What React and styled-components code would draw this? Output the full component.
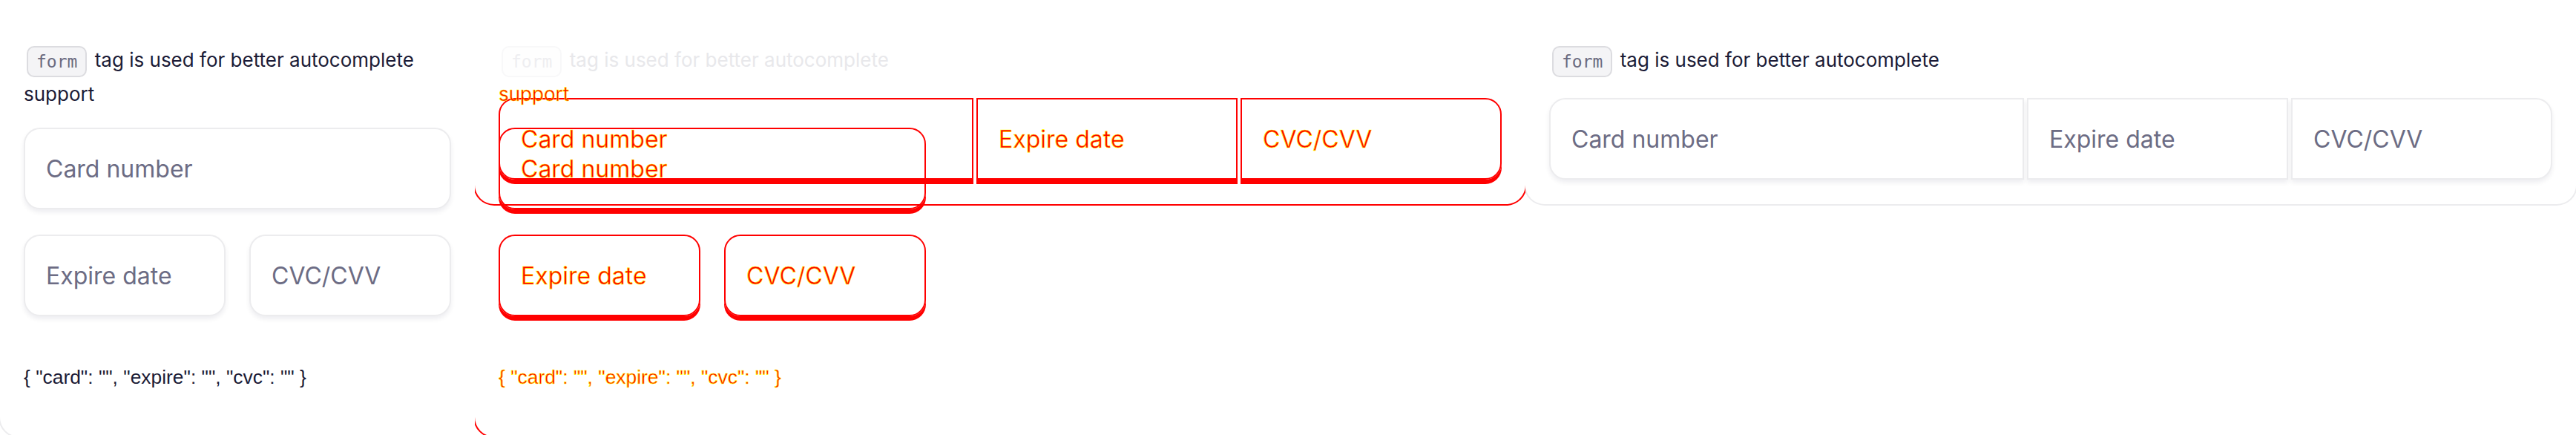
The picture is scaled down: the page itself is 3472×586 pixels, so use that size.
import React from "react";
import styled, { createGlobalStyle, css } from "styled-components";

const Global = createGlobalStyle`
  html, body { margin: 0; padding: 0; background: #fff; }
  body { font-family: Inter, "Noto Sans", sans-serif; }
`;

const INK = "#1b1b36";
const HINT = "#6c6c84";
const LINE = "#ececee";
const RED = "#ff0000";
const YELLOW = "#ffff00";

const Strip = styled.div`
  display: flex;
  width: 3472px;
  height: 586px;
  overflow: hidden;
`;

const Panel = styled.section`
  position: relative;
  flex: none;
  width: ${(p) => p.$w}px;
  height: 586px;
  overflow: hidden;
  background: #fff;
`;

const Layer = styled.div`
  position: absolute;
  top: 0;
  left: 0;
  width: ${(p) => p.$w}px;
  height: 586px;
  overflow: hidden;
`;

const Card = styled.div`
  box-sizing: border-box;
  margin: 0 -2px;
  padding: 58px 32px ${(p) => p.$padBottom}px;
  border: 2px solid ${(p) => (p.$tone === "diff" ? RED : LINE)};
  border-top: none;
  border-radius: ${(p) => (p.$clipRight ? "0 0 0 28px" : "0 0 28px 28px")};
  background: ${(p) => (p.$tone === "diff" ? "transparent" : "#fff")};
`;

const textColor = (tone) =>
  tone === "faded" ? "#e8e8eb" : tone === "hidden" ? "transparent" : INK;

const Lead = styled.p`
  margin: 0;
  font-size: 26px;
  line-height: 40px;
  color: ${(p) => textColor(p.$tone)};
`;

const tagTones = {
  normal: { bg: "#f4f4f6", border: "#dcdce0", color: "#6b6b80" },
  faded: { bg: "#fefefe", border: "#f8f8f9", color: "#eeeef1" },
  hidden: { bg: "transparent", border: "transparent", color: "transparent" },
};

const CodeTag = styled.code`
  display: inline-block;
  vertical-align: middle;
  box-sizing: border-box;
  height: 42px;
  margin: 4px 3px 3px 4px;
  padding: 0 11px;
  border: 2px solid ${(p) => tagTones[p.$tone].border};
  border-radius: 10px;
  background: ${(p) => tagTones[p.$tone].bg};
  color: ${(p) => tagTones[p.$tone].color};
  font-family: "DejaVu Sans Mono", "Liberation Mono", monospace;
  font-size: 23px;
  line-height: 38px;
`;

const hot = css`
  color: ${RED};
  -webkit-text-stroke: 0.6px ${YELLOW};
`;

const Hot = styled.span`
  ${hot}
`;

const Fields = styled.div`
  display: grid;
  margin-top: 25px;
  ${(p) =>
    p.$layout === "wide"
      ? css`
          grid-template-columns: 1fr 352px 352px;
          column-gap: 4px;
        `
      : css`
          grid-template-columns: 1fr 1fr;
          gap: 34px 32px;
          & > :first-child {
            grid-column: 1 / -1;
          }
        `}
`;

const radii = {
  full: "22px",
  left: "22px 0 0 22px",
  mid: "0",
  right: "0 22px 22px 0",
};

const fieldBox = css`
  box-sizing: border-box;
  width: 100%;
  height: 110px;
  margin: 0;
  padding: 0 28px;
  border: 2px solid ${LINE};
  border-radius: ${(p) => radii[p.$shape]};
  font-family: Inter, "Noto Sans", sans-serif;
  font-size: 32px;
`;

const Field = styled.input`
  ${fieldBox}
  display: block;
  background: #fff;
  color: ${INK};
  outline: none;
  box-shadow: 0 4px 6px rgba(20, 20, 50, 0.07);
  &::placeholder {
    color: ${HINT};
  }
`;

const GhostField = styled.div`
  ${fieldBox}
  display: flex;
  align-items: center;
  border-color: ${RED};
  box-shadow: 0 6px 0 ${RED};
  ${hot}
`;

const Output = styled.p`
  margin: 62px 0 0;
  font-family: "Liberation Sans", Arial, sans-serif;
  font-size: 26.4px;
  line-height: 40px;
  color: ${INK};
  ${(p) => p.$tone === "diff" && hot}
`;

const FIELDS = [
  { name: "card", label: "Card number" },
  { name: "expire", label: "Expire date" },
  { name: "cvc", label: "CVC/CVV" },
];

const shapeFor = (layout, i) =>
  layout === "wide" ? ["left", "mid", "right"][i] : "full";

function CardForm({ layout, ghost }) {
  return (
    <Fields as={ghost ? "div" : "form"} $layout={layout}>
      {FIELDS.map((f, i) =>
        ghost ? (
          <GhostField key={f.name} $shape={shapeFor(layout, i)}>
            {f.label}
          </GhostField>
        ) : (
          <Field
            key={f.name}
            name={f.name}
            placeholder={f.label}
            $shape={shapeFor(layout, i)}
          />
        )
      )}
    </Fields>
  );
}

const JSON_TEXT = '{ "card": "", "expire": "", "cvc": "" }';

function Expected() {
  return (
    <Card $padBottom={60} $clipRight>
      <Lead $tone="normal">
        <CodeTag $tone="normal">form</CodeTag> tag is used for better
        autocomplete support
      </Lead>
      <CardForm layout="stack" />
      <Output>{JSON_TEXT}</Output>
    </Card>
  );
}

function Received() {
  return (
    <Card $padBottom={33}>
      <Lead $tone="normal">
        <CodeTag $tone="normal">form</CodeTag> tag is used for better
        autocomplete
      </Lead>
      <CardForm layout="wide" />
    </Card>
  );
}

function Diff() {
  return (
    <>
      <Layer $w={1416}>
        <Card $tone="diff" $padBottom={33}>
          <Lead $tone="faded">
            <CodeTag $tone="faded">form</CodeTag> tag is used for better
            autocomplete
          </Lead>
          <CardForm layout="wide" ghost />
        </Card>
      </Layer>
      <Layer $w={640}>
        <Card $tone="diff" $padBottom={60} $clipRight>
          <Lead $tone="hidden">
            <CodeTag $tone="hidden">form</CodeTag> tag is used for better
            autocomplete <Hot>support</Hot>
          </Lead>
          <CardForm layout="stack" ghost />
          <Output $tone="diff">{JSON_TEXT}</Output>
        </Card>
      </Layer>
    </>
  );
}

export default function App() {
  return (
    <>
      <Global />
      <Strip>
        <Panel $w={640}>
          <Expected />
        </Panel>
        <Panel $w={1416}>
          <Diff />
        </Panel>
        <Panel $w={1416}>
          <Received />
        </Panel>
      </Strip>
    </>
  );
}
